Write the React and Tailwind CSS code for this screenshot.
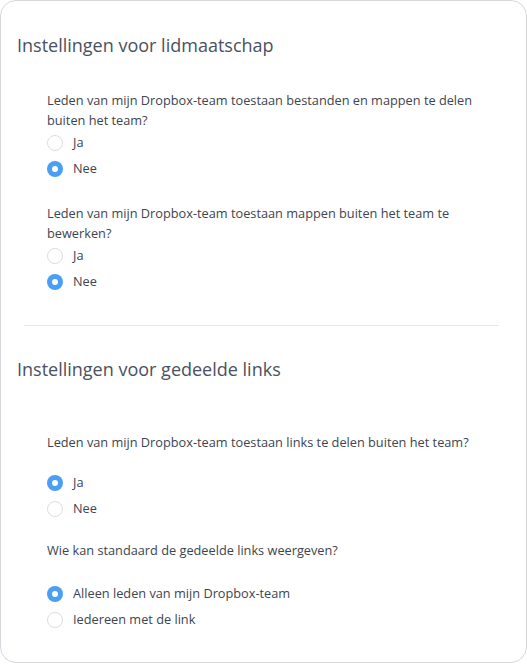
import React from 'react';

function Radio({ label, checked }) {
  return (
    <label className="flex items-center h-[26px] gap-[10px] text-[12.75px] text-[#3d4450]">
      {checked ? (
        <span className="w-4 h-4 rounded-full bg-[#4a9ff5] flex items-center justify-center">
          <span className="w-[6px] h-[6px] rounded-full bg-white" />
        </span>
      ) : (
        <span className="w-4 h-4 rounded-full border border-[#dcdde0] bg-white" />
      )}
      <span>{label}</span>
    </label>
  );
}

function Question({ text, className = '', optClass = '', options }) {
  return (
    <div className={className}>
      <p className="text-[12.75px] leading-[20px] text-[#3d4450] w-[440px]">{text}</p>
      <div className={optClass}>
        {options.map(o => <Radio key={o.label} label={o.label} checked={o.checked} />)}
      </div>
    </div>
  );
}

export default function App() {
  return (
    <div className="w-[527px] h-[664px] bg-white" style={{ fontFamily: '"Open Sans", sans-serif' }}>
      <div className="w-[527px] h-[663px] border border-[#d4d7dc] rounded-[16px] pt-[32px] pl-[16px]">
        <h2 className="text-[18px] leading-[24px] text-[#4a5160]">Instellingen voor lidmaatschap</h2>
        <div className="pl-[30px] mt-[33px]">
          <Question
            text="Leden van mijn Dropbox-team toestaan bestanden en mappen te delen buiten het team?"
            options={[{ label: 'Ja' }, { label: 'Nee', checked: true }]}
          />
          <Question
            className="mt-[21px]"
            text="Leden van mijn Dropbox-team toestaan mappen buiten het team te bewerken?"
            options={[{ label: 'Ja' }, { label: 'Nee', checked: true }]}
          />
        </div>
        <div className="ml-[7px] w-[475px] h-px bg-[#e6e8eb] mt-[30px]" />
        <h2 className="text-[18px] leading-[24px] text-[#4a5160] mt-[31px]">Instellingen voor gedeelde links</h2>
        <div className="pl-[30px] mt-[51px]">
          <Question
            optClass="mt-[18px]"
            text="Leden van mijn Dropbox-team toestaan links te delen buiten het team?"
            options={[{ label: 'Ja', checked: true }, { label: 'Nee' }]}
          />
          <Question
            className="mt-[18px]"
            optClass="mt-[21px]"
            text="Wie kan standaard de gedeelde links weergeven?"
            options={[{ label: 'Alleen leden van mijn Dropbox-team', checked: true }, { label: 'Iedereen met de link' }]}
          />
        </div>
      </div>
    </div>
  );
}
